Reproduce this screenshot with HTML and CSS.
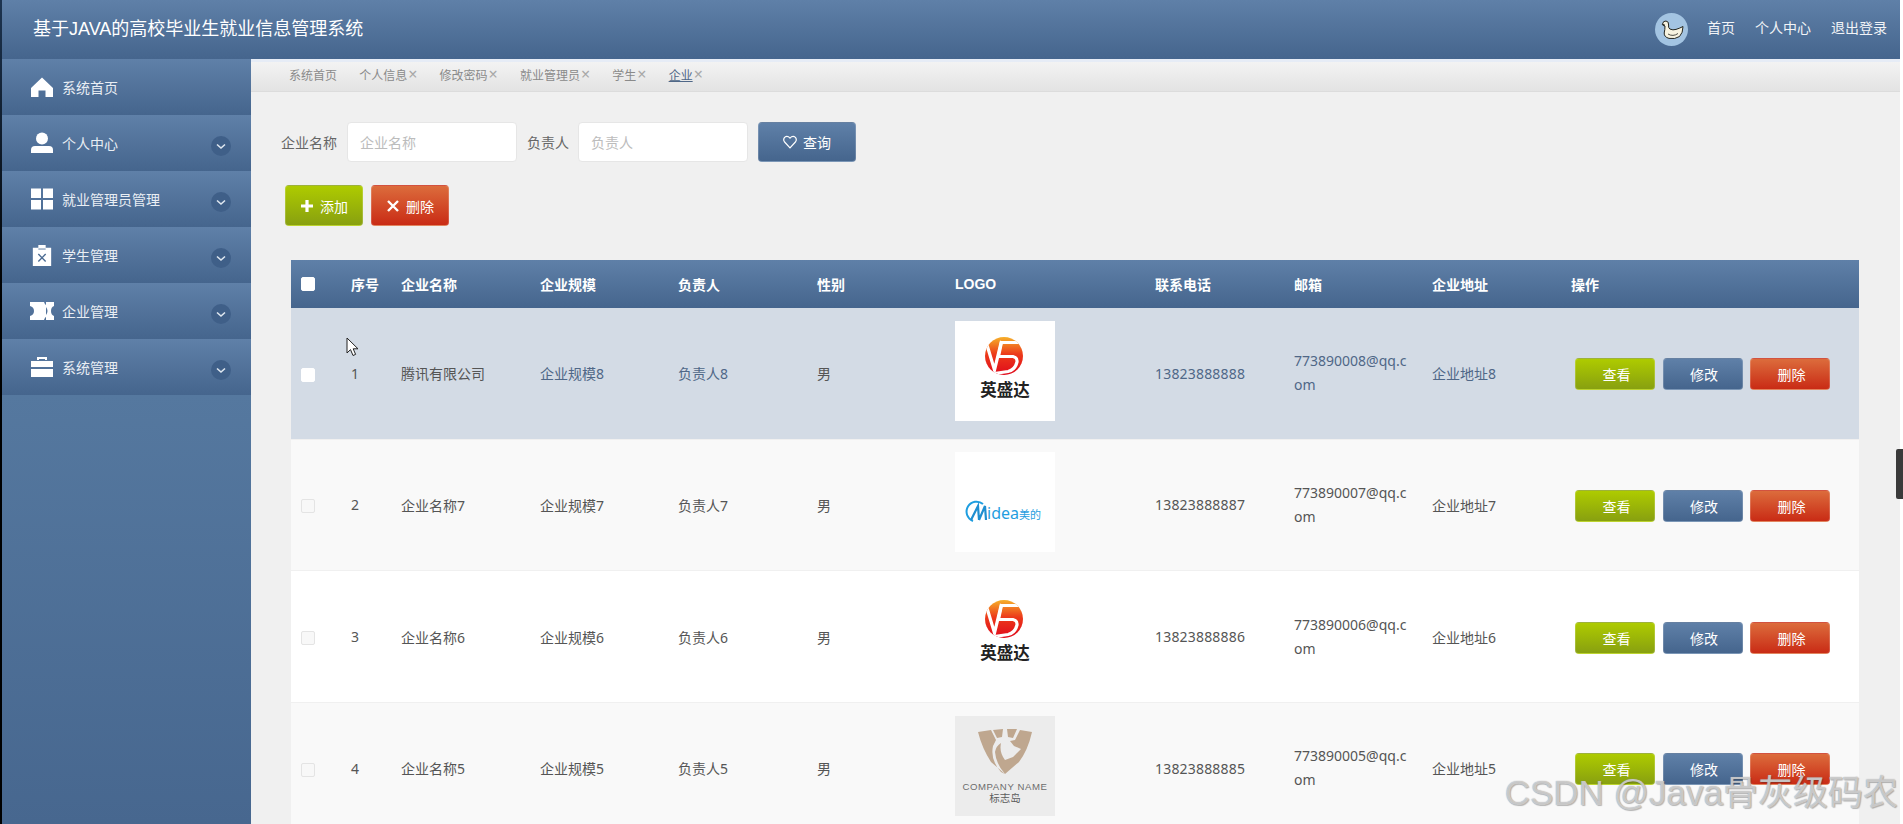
FILE: index.html
```html
<!DOCTYPE html>
<html lang="zh-CN">
<head>
<meta charset="utf-8">
<title>基于JAVA的高校毕业生就业信息管理系统</title>
<link rel="stylesheet" href="styles.css">
</head>
<body>
<svg class="defs" width="0" height="0" aria-hidden="true">
  <defs>
    <linearGradient id="v5grad" x1="0" y1="0" x2="0" y2="1">
      <stop offset="0" stop-color="#f6b02a"/><stop offset=".45" stop-color="#ec3a1a"/><stop offset="1" stop-color="#e00a1c"/>
    </linearGradient>
    <clipPath id="v5clip"><circle cx="49" cy="35" r="19"/></clipPath>
    <symbol id="logo-v5" viewBox="0 0 100 100">
      <rect width="100" height="100" fill="#fff"/>
      <circle cx="49" cy="35" r="19" fill="url(#v5grad)"/>
      <g clip-path="url(#v5clip)" fill="none" stroke="#fff" stroke-width="3.2">
        <path d="M32 24 L39.5 49 L46.5 20"/>
        <path d="M46 21.5 H66"/>
        <path d="M46.5 21 L43.5 35.5 H58 Q62.5 36.5 62 41 Q60 49 53 50.5 L36 53"/>
      </g>
      <text x="50" y="75" class="logo-cn">英盛达</text>
    </symbol>
    <symbol id="logo-midea" viewBox="0 0 100 100">
      <rect width="100" height="100" fill="#fff"/>
      <path d="M28 52 A10 10 0 1 0 18 69" fill="none" stroke="#1f9ee0" stroke-width="2"/>
      <path d="M16 68 L23 54 L24 68 M24 68 L30 54 L31 68" fill="none" stroke="#1f8ed0" stroke-width="2.2"/>
      <text x="32" y="67" class="logo-midea">idea<tspan class="logo-midea-cn">美的</tspan></text>
    </symbol>
    <symbol id="logo-co" viewBox="0 0 100 100">
      <rect width="100" height="100" fill="#ececec"/>
      <path d="M23 16 L36 14 L41 24 L38 30 Q35 44 46 56 L50 58 L36 46 Q27 32 23 16 Z" fill="#bfa78f"/>
      <path d="M38 14 L48 13 L47 21 L42 22 Z M52 13 L62 13 L58 22 L53 21 Z M65 14 L77 16 Q73 34 64 46 L50 58 Q41 48 40 36 Q41 30 46 27 Q44 36 50 44 L58 41 L66 33 L59 30 L55 25 L60 24 Z" fill="#bfa78f"/>
      <text x="50" y="74" class="logo-co-en">COMPANY NAME</text>
      <text x="50" y="86" class="logo-co-cn">标志岛</text>
    </symbol>
    <symbol id="chev" viewBox="0 0 20 20">
      <circle cx="10" cy="10" r="10" fill="#3f5f88"/>
      <path d="M6 8.5 L10 12 L14 8.5" fill="none" stroke="#dfe7f0" stroke-width="1.6"/>
    </symbol>
  </defs>
</svg>

<div class="app">
  <header class="topbar">
    <h1 class="title">基于JAVA的高校毕业生就业信息管理系统</h1>
    <div class="topnav">
      <svg class="avatar" viewBox="0 0 33 33" aria-hidden="true">
        <circle cx="16.5" cy="16.5" r="16.5" fill="#a3c4e2"/>
        <path d="M7.5 11 Q8 7.8 11 8 Q14 8.4 13.6 12 Q13 14.5 14.8 16 Q18 17.5 21 16.4 Q24 15.6 28 13.5 Q28 20 24.5 23.5 Q20 26.5 14 25.4 Q9 24 9.2 20 Q10 16.5 10 13 Q8.6 12.8 7.5 11 Z" fill="#f7f3df" stroke="#23251f" stroke-width="1"/>
        <path d="M6.5 11.5 L9.5 11 L9.5 13.4 Z" fill="#23251f"/>
        <path d="M13 21 Q18 24 23 20.5" fill="none" stroke="#23251f" stroke-width=".8"/>
      </svg>
      <a class="topnav-link">首页</a>
      <a class="topnav-link">个人中心</a>
      <a class="topnav-link">退出登录</a>
    </div>
  </header>

  <div class="body-row">
    <nav class="sidebar">
      <div class="side-item">
        <svg class="side-icon" viewBox="0 0 22 22"><path d="M11 1.5 L22 12 L22 21 L14.5 21 L14.5 14.5 L7.5 14.5 L7.5 21 L0 21 L0 12 Z" fill="#fff"/></svg>
        <span class="side-label">系统首页</span>
      </div>
      <div class="side-item">
        <svg class="side-icon" viewBox="0 0 22 22"><circle cx="11" cy="6.5" r="6" fill="#fff"/><path d="M0 21 L0 18 Q0 14 4 14 L18 14 Q22 14 22 18 L22 21 Z" fill="#fff"/></svg>
        <span class="side-label">个人中心</span>
        <svg class="side-chev"><use href="#chev"/></svg>
      </div>
      <div class="side-item">
        <svg class="side-icon" viewBox="0 0 22 22"><path d="M0 0.5H10V10H0ZM12 0.5H22V10H12ZM0 12H10V21.5H0ZM12 12H22V21.5H12Z" fill="#fff"/></svg>
        <span class="side-label">就业管理员管理</span>
        <svg class="side-chev"><use href="#chev"/></svg>
      </div>
      <div class="side-item">
        <svg class="side-icon" viewBox="0 0 22 24"><path d="M1 4 H7 V1 H15 V4 H21 V24 H1 Z" fill="#fff"/><path d="M7 5.5 H15" stroke="#54759c" stroke-width="1"/><path d="M7 11 L15 19 M15 11 L7 19" stroke="#4a6a92" stroke-width="1.5"/></svg>
        <span class="side-label">学生管理</span>
        <svg class="side-chev"><use href="#chev"/></svg>
      </div>
      <div class="side-item">
        <svg class="side-icon side-icon-wide" viewBox="0 0 26 18"><path d="M1 0 H15 Q16 3 17 3 L17 0 H25 V4 Q22 5 22 9 Q22 13 25 14 V18 H17 L17 15 Q16 15 15 18 H1 V14 Q5 13 5 9 Q5 5 1 4 Z M17 5 V13 Q20 9 17 5 Z" fill="#fff" fill-rule="evenodd"/></svg>
        <span class="side-label">企业管理</span>
        <svg class="side-chev"><use href="#chev"/></svg>
      </div>
      <div class="side-item">
        <svg class="side-icon" viewBox="0 0 22 22"><path d="M6 4 V1 H16 V4 H14 V3 H8 V4 Z M0 5 H22 V11 H0 Z M0 13 H22 V21 H0 Z" fill="#fff"/></svg>
        <span class="side-label">系统管理</span>
        <svg class="side-chev"><use href="#chev"/></svg>
      </div>
      <div class="side-rest"></div>
    </nav>

    <main class="main">
      <div class="tabs">
        <span class="tab">系统首页</span>
        <span class="tab">个人信息<i class="tab-x">×</i></span>
        <span class="tab">修改密码<i class="tab-x">×</i></span>
        <span class="tab">就业管理员<i class="tab-x">×</i></span>
        <span class="tab">学生<i class="tab-x">×</i></span>
        <span class="tab tab-active"><u>企业</u><i class="tab-x">×</i></span>
      </div>

      <div class="search">
        <label class="search-label">企业名称</label>
        <input class="search-input" placeholder="企业名称">
        <label class="search-label search-label-tight">负责人</label>
        <input class="search-input" placeholder="负责人">
        <button class="btn btn-blue btn-query">
          <svg class="btn-icon" viewBox="0 0 14 14"><path d="M7 12.8 L1.6 7 Q-.2 4.6 1.6 2.4 Q4.4 .2 7 3.2 Q9.6 .2 12.4 2.4 Q14.2 4.6 12.4 7 Z" fill="none" stroke="#fff" stroke-width="1.2"/></svg>查询
        </button>
      </div>

      <div class="actions">
        <button class="btn btn-green btn-act">
          <svg class="btn-icon" viewBox="0 0 14 14"><path d="M7 1 V13 M1 7 H13" stroke="#fff" stroke-width="3.2"/></svg>添加
        </button>
        <button class="btn btn-red btn-act">
          <svg class="btn-icon" viewBox="0 0 14 14"><path d="M2 2 L12 12 M12 2 L2 12" stroke="#fff" stroke-width="2.4"/></svg>删除
        </button>
      </div>

      <div class="table">
        <div class="row row-head">
          <div class="cell"><span class="check check-head"></span></div>
          <div class="cell">序号</div>
          <div class="cell">企业名称</div>
          <div class="cell">企业规模</div>
          <div class="cell">负责人</div>
          <div class="cell">性别</div>
          <div class="cell cell-logo-head">LOGO</div>
          <div class="cell">联系电话</div>
          <div class="cell">邮箱</div>
          <div class="cell">企业地址</div>
          <div class="cell">操作</div>
        </div>

        <div class="row row-hover">
          <div class="cell"><span class="check check-hover"></span></div>
          <div class="cell">1</div>
          <div class="cell">腾讯有限公司</div>
          <div class="cell">企业规模8</div>
          <div class="cell">负责人8</div>
          <div class="cell">男</div>
          <div class="cell"><svg class="logo"><use href="#logo-v5"/></svg></div>
          <div class="cell cell-phone">13823888888</div>
          <div class="cell cell-email">773890008@qq.com</div>
          <div class="cell">企业地址8</div>
          <div class="cell cell-ops"><button class="btn btn-green btn-op">查看</button><button class="btn btn-blue btn-op">修改</button><button class="btn btn-red btn-op">删除</button></div>
        </div>

        <div class="row row-odd">
          <div class="cell"><span class="check"></span></div>
          <div class="cell">2</div>
          <div class="cell">企业名称7</div>
          <div class="cell">企业规模7</div>
          <div class="cell">负责人7</div>
          <div class="cell">男</div>
          <div class="cell"><svg class="logo"><use href="#logo-midea"/></svg></div>
          <div class="cell cell-phone">13823888887</div>
          <div class="cell cell-email">773890007@qq.com</div>
          <div class="cell">企业地址7</div>
          <div class="cell cell-ops"><button class="btn btn-green btn-op">查看</button><button class="btn btn-blue btn-op">修改</button><button class="btn btn-red btn-op">删除</button></div>
        </div>

        <div class="row row-even">
          <div class="cell"><span class="check"></span></div>
          <div class="cell">3</div>
          <div class="cell">企业名称6</div>
          <div class="cell">企业规模6</div>
          <div class="cell">负责人6</div>
          <div class="cell">男</div>
          <div class="cell"><svg class="logo"><use href="#logo-v5"/></svg></div>
          <div class="cell cell-phone">13823888886</div>
          <div class="cell cell-email">773890006@qq.com</div>
          <div class="cell">企业地址6</div>
          <div class="cell cell-ops"><button class="btn btn-green btn-op">查看</button><button class="btn btn-blue btn-op">修改</button><button class="btn btn-red btn-op">删除</button></div>
        </div>

        <div class="row row-odd">
          <div class="cell"><span class="check"></span></div>
          <div class="cell">4</div>
          <div class="cell">企业名称5</div>
          <div class="cell">企业规模5</div>
          <div class="cell">负责人5</div>
          <div class="cell">男</div>
          <div class="cell"><svg class="logo"><use href="#logo-co"/></svg></div>
          <div class="cell cell-phone">13823888885</div>
          <div class="cell cell-email">773890005@qq.com</div>
          <div class="cell">企业地址5</div>
          <div class="cell cell-ops"><button class="btn btn-green btn-op">查看</button><button class="btn btn-blue btn-op">修改</button><button class="btn btn-red btn-op">删除</button></div>
        </div>
      </div>
    </main>
  </div>

  <svg class="cursor" viewBox="0 0 13 20" aria-hidden="true"><path d="M1 1 L1 16 L4.5 12.6 L7 18.5 L9.6 17.4 L7.2 11.8 L12 11.8 Z" fill="#fff" stroke="#222" stroke-width="1"/></svg>
  <div class="scroll-thumb"></div>
  <div class="watermark">CSDN @Java骨灰级码农</div>
</div>
</body>
</html>
```

FILE: styles.css
```css
* { box-sizing: border-box; }

html, body {
  margin: 0;
  padding: 0;
  height: 100%;
  overflow: hidden;
  background: #fff;
}

body {
  font-family: "Noto Sans", "Noto Sans CJK SC", sans-serif;
  font-size: 14px;
  color: #555;
}

.defs { position: absolute; }

.app {
  position: relative;
  width: 1903px;
  height: 824px;
  display: flex;
  flex-direction: column;
  padding: 0 3px 0 2px;
  background:
    linear-gradient(#1d3450, #000 300px) left / 2px 100% no-repeat,
    #fff;
  overflow: hidden;
}

/* top bar */
.topbar {
  height: 59px;
  flex: none;
  display: flex;
  align-items: center;
  justify-content: space-between;
  padding: 0 13px 0 31px;
  background: linear-gradient(#5f80a8, #45658d);
}

.title {
  margin: 0 0 5px;
  font-family: "Liberation Sans", "Noto Sans CJK SC", sans-serif;
  font-size: 18px;
  font-weight: 400;
  color: #fff;
}

.topnav {
  display: flex;
  align-items: center;
  gap: 20px;
}

.avatar {
  width: 33px;
  height: 33px;
  margin-right: -1px;
}

.topnav-link {
  margin-bottom: 5px;
  font-size: 14px;
  color: #f2f4f7;
}

/* body */
.body-row {
  flex: 1;
  display: flex;
  min-height: 0;
}

.sidebar {
  width: 249px;
  flex: none;
  display: flex;
  flex-direction: column;
  background: #45658d;
}

.side-item {
  height: 56px;
  flex: none;
  display: flex;
  align-items: center;
  padding: 0 20px 0 29px;
  background: linear-gradient(#5f80a8, #45658d);
}

.side-icon {
  width: 22px;
  height: 22px;
  flex: none;
}

.side-icon-wide {
  width: 26px;
  margin: 0 -2px;
}

.side-label {
  margin-left: 9px;
  font-size: 14px;
  color: #e9eef4;
}

.side-chev {
  width: 20px;
  height: 20px;
  margin: 5px 0 0 auto;
}

.side-rest {
  flex: 1;
  background: linear-gradient(#55789f, #47678f);
}

/* main */
.main {
  flex: 1;
  min-width: 0;
  background: #f0f0f0;
}

.tabs {
  height: 33px;
  display: flex;
  align-items: center;
  gap: 22.2px;
  padding: 0 0 4px 38px;
  font-size: 12px;
  color: #8a8a8a;
  border-top: 3px solid #e6ecf6;
  border-bottom: 1px solid #dcdcdc;
  background: linear-gradient(#f3f3f3, #e3e3e3);
}

.tab-x {
  font-style: normal;
  font-size: 16px;
  line-height: 12px;
  color: #a8a8a8;
  margin-left: 1px;
}

.tab-active { color: #4f6787; }

.search {
  display: flex;
  align-items: center;
  height: 40px;
  margin-top: 30px;
  padding-left: 30px;
}

.search-label {
  color: #666;
}

.search-label-tight { margin-right: -1px; }

.search-input {
  width: 170px;
  height: 40px;
  margin: 0 10px;
  padding: 0 12px;
  border: 1px solid #e6e6e6;
  border-radius: 4px;
  background: #fff;
  font: inherit;
  font-size: 14px;
  outline: none;
}

.search-input::placeholder { color: #bcbcbc; }

.btn {
  border: 1px solid rgba(255, 255, 255, .18);
  border-radius: 4px;
  color: #fff;
  font: inherit;
  font-size: 14px;
  padding: 0;
  display: inline-flex;
  align-items: center;
  justify-content: center;
}

.btn-blue { background: linear-gradient(#5f80a8, #45658d); }
.btn-green { background: linear-gradient(#aecb00, #88a010); }
.btn-red { background: linear-gradient(#dc6c3c, #c92b15); }

.btn-icon {
  width: 14px;
  height: 14px;
  margin-right: 6px;
  flex: none;
}

.btn-query {
  width: 98px;
  height: 40px;
}

.actions {
  display: flex;
  gap: 8px;
  height: 41px;
  margin-top: 23px;
  padding-left: 34px;
}

.btn-act {
  width: 78px;
  height: 41px;
}

/* table */
.table {
  width: 1568px;
  margin: 34px 0 0 40px;
}

.row {
  display: grid;
  grid-template-columns: 50px 50px 139px 138px 139px 138px 200px 139px 138px 139px 298px;
  align-items: center;
  height: 131.67px;
  border-bottom: 1px solid #f0f0f0;
}

.row-head {
  height: 48px;
  border-bottom: 0;
  background: linear-gradient(#5f80a8, #45658d);
  color: #fff;
  font-weight: 700;
}

.row-hover { background: #d3dbe5; color: #4f6787; }
.row-hover .cell:nth-child(2),
.row-hover .cell:nth-child(3),
.row-hover .cell:nth-child(6) { color: #555; }
.row-odd { background: #f9f9f9; }
.row-even { background: #fff; }

.cell {
  padding-left: 10px;
  min-width: 0;
  display: block;
}

.cell-logo-head {
  font-family: "Liberation Sans", sans-serif;
}

.cell-phone {
  letter-spacing: .18px;
}

.cell-email {
  padding-right: 10px;
  line-height: 24px;
  word-break: break-all;
}

.cell-ops {
  display: flex;
  gap: 7.5px;
  margin-top: 2px;
  padding-left: 14px;
}

.btn-op {
  width: 80px;
  height: 32px;
  padding-left: 3px;
  font-size: 14px;
}

.check {
  display: block;
  width: 14px;
  height: 14px;
  margin-top: 3px;
  border: 1px solid #e4e4e4;
  border-radius: 2px;
  background: #f8f8f8;
}

.check-head {
  margin-top: 0;
  background: #fff;
  border-color: #fff;
}

.check-hover {
  background: #fff;
  border-color: #fff;
}

.logo {
  display: block;
  width: 100px;
  height: 100px;
  margin-top: -5px;
}

.logo-cn {
  font-size: 16.5px;
  font-weight: 700;
  fill: #222;
  text-anchor: middle;
  font-family: "Noto Sans CJK SC", sans-serif;
}

.logo-midea {
  font-size: 16px;
  fill: #1f9ee0;
  font-family: "Noto Sans", "Noto Sans CJK SC", sans-serif;
}

.logo-midea-cn {
  font-size: 11px;
}

.logo-co-en {
  font-size: 9.6px;
  letter-spacing: .6px;
  fill: #6d6d6d;
  text-anchor: middle;
  font-family: "Liberation Sans", sans-serif;
}

.logo-co-cn {
  font-size: 10.5px;
  fill: #5c5c5c;
  text-anchor: middle;
  font-family: "Noto Sans CJK SC", sans-serif;
}

/* overlays */
.cursor {
  position: absolute;
  left: 346px;
  top: 337px;
  width: 13px;
  height: 20px;
}

.scroll-thumb {
  position: absolute;
  right: 0;
  top: 449px;
  width: 7px;
  height: 50px;
  border-radius: 2px 0 0 2px;
  background: #3a3a3a;
}

.watermark {
  position: absolute;
  right: 5px;
  top: 771px;
  font-family: "Liberation Sans", "Noto Sans CJK SC", sans-serif;
  font-size: 35px;
  line-height: 44px;
  white-space: nowrap;
  color: rgba(255, 255, 255, .55);
  text-shadow: 0 0 1px #888, 1px 1px 1px rgba(0, 0, 0, .25);
}
```
